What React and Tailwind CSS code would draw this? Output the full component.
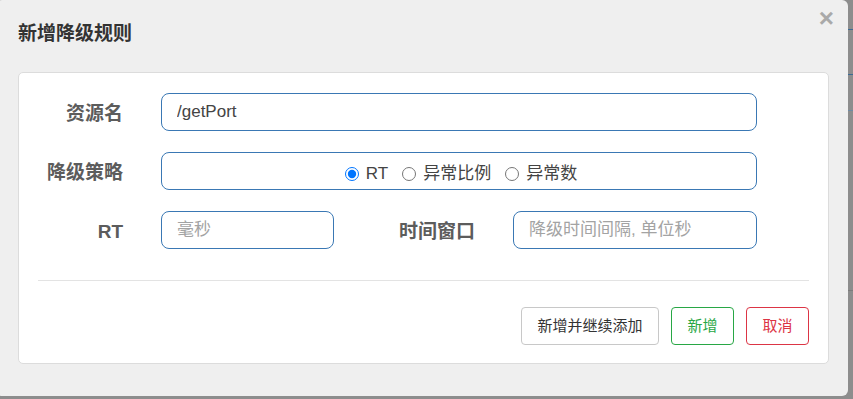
import React from "react";

const cjk = { fontFamily: '"Liberation Sans", "Noto Sans CJK SC", sans-serif' };

const Field = ({ value, placeholder, className = "" }) => (
    <input
        readOnly
        defaultValue={value}
        placeholder={placeholder}
        className={`h-[38px] rounded-lg border border-[#3a78b4] bg-white px-[15px] text-[17px] text-[#444] outline-none placeholder:text-[#a3a3a3] ${className}`}
        style={cjk}
    />
);

const Label = ({ children, className = "" }) => (
    <label className={`flex items-center justify-end pr-[38px] pt-[4px] text-[19px] font-bold text-[#5c5c5c] ${className}`}>
        {children}
    </label>
);

const Radio = ({ label, checked }) => (
    <label className="flex items-center text-[17px] text-[#444]">
        <input type="radio" name="grade" defaultChecked={checked} className="m-0 mr-[7px] h-[14px] w-[14px]" />
        {label}
    </label>
);

export default function App() {
    return (
        <div className="relative flex h-[399px] w-[853px] overflow-hidden bg-[#8d8d8d]" style={cjk}>
            {/* page content peeking behind the overlay */}
            <div className="absolute right-0 top-[29px] h-px w-[6px] bg-[#3d6a93]" />
            <div className="absolute right-0 top-[74px] h-px w-[6px] bg-[#3d6a93]" />
            <div className="absolute right-0 top-[110px] h-px w-[6px] bg-[#6f8aa3]" />
            <div className="absolute right-0 top-[290px] h-px w-[6px] bg-[#7c7c7c]" />

            <div className="relative z-10 ml-[-4px] flex h-[396px] w-[852px] flex-col rounded-md bg-[#efefef] pl-[22px]">
                <div className="flex h-[72px] items-start justify-between">
                    <h4 className="mt-[20px] text-[19px] font-bold text-[#333]">新增降级规则</h4>
                    <span className="mr-[14px] mt-[4px] text-[26px] font-bold leading-[28px] text-[#a9a9a9]">×</span>
                </div>

                <div className="flex h-[292px] w-[811px] flex-col rounded-[5px] border border-[#dcdcdc] bg-white pt-[20px]">
                    <div className="flex flex-col gap-[21px]">
                        <div className="flex">
                            <Label className="w-[142px]">资源名</Label>
                            <Field value="/getPort" className="w-[596px]" />
                        </div>
                        <div className="flex">
                            <Label className="w-[142px]">降级策略</Label>
                            <div className="flex h-[38px] w-[596px] items-center justify-center gap-[14px] rounded-lg border border-[#3a78b4] pl-[4px] pt-[5px]">
                                <Radio label="RT" checked />
                                <Radio label="异常比例" />
                                <Radio label="异常数" />
                            </div>
                        </div>
                        <div className="flex">
                            <Label className="w-[142px]">RT</Label>
                            <Field placeholder="毫秒" className="w-[173px]" />
                            <Label className="w-[179px]">时间窗口</Label>
                            <Field placeholder="降级时间间隔, 单位秒" className="w-[244px]" />
                        </div>
                    </div>

                    <div className="ml-[19px] mr-[19px] mt-[31px] h-px bg-[#e3e3e3]" />

                    <div className="mr-[19px] mt-[26px] flex justify-end gap-[12px] text-[15px]">
                        <button className="h-[38px] w-[138px] rounded-[4px] border border-[#c8c8c8] bg-white text-[#333]">新增并继续添加</button>
                        <button className="h-[38px] w-[63px] rounded-[4px] border border-[#28a745] bg-white text-[#28a745]">新增</button>
                        <button className="h-[38px] w-[63px] rounded-[4px] border border-[#dc3545] bg-white text-[#dc3545]">取消</button>
                    </div>
                </div>
            </div>
        </div>
    );
}
